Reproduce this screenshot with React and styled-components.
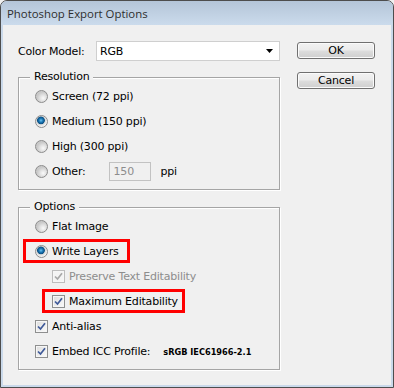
import React from "react";
import styled, { createGlobalStyle, css } from "styled-components";

const Global = createGlobalStyle`
  html, body { margin: 0; padding: 0; background: #f0f0f0; }
  body { font-family: "DejaVu Sans", "Liberation Sans", sans-serif; }
`;

const Window = styled.div`
  width: 394px;
  height: 388px;
  box-sizing: border-box;
  border: 1px solid #4d4d4d;
  border-radius: 7px 7px 0 0;
  background: #cad9ea;
  display: flex;
  flex-direction: column;
  overflow: hidden;
`;

const TitleBar = styled.div`
  height: 24px;
  flex: none;
  display: flex;
  align-items: center;
  padding-left: 6px;
  background: linear-gradient(#b4c5d8, #cbdbec);
  font-family: "Open Sans", "Liberation Sans", sans-serif;
  font-size: 11.4px;
  color: #2e2e2e;
`;

const Frame = styled.div`
  flex: 1;
  display: flex;
  padding: 0 2px 2px 2px;
`;

const Content = styled.div`
  flex: 1;
  display: flex;
  align-items: flex-start;
  background: #f0f0f0;
  padding: 16px 0 0 15px;
  font-size: 11px;
  letter-spacing: -0.2px;
  color: #000;
`;

const LeftCol = styled.div`
  width: 262px;
  display: flex;
  flex-direction: column;
`;

const RightCol = styled.div`
  margin-left: 17px;
  padding-top: 1px;
  display: flex;
  flex-direction: column;
  gap: 13px;
`;

const FieldRow = styled.div`
  display: flex;
  align-items: center;
  height: 20px;
`;

const FieldLabel = styled.span`
  width: 78px;
`;

const Select = styled.div`
  width: 184px;
  height: 20px;
  box-sizing: border-box;
  border: 1px solid #cfcfcf;
  background: #fff;
  display: flex;
  align-items: center;
  justify-content: space-between;
  padding: 0 6px 0 3px;
`;

const Button = styled.button`
  width: 78px;
  height: 17px;
  box-sizing: border-box;
  padding: 0;
  border: 1px solid #707070;
  border-radius: 3px;
  background: linear-gradient(#f2f2f2 0%, #ebebeb 48%, #dddddd 52%, #cfcfcf 100%);
  box-shadow: inset 0 0 0 1px #fbfbfb;
  font-family: "DejaVu Sans", sans-serif;
  font-size: 11px;
  letter-spacing: -0.2px;
  line-height: 14px;
  color: #000;
`;

const GroupBox = styled.div`
  position: relative;
  margin-top: ${(p) => p.$top}px;
  border: 1px solid #a5a5a5;
  box-shadow: inset 1px 1px 0 #fff, 1px 1px 0 #fff;
  padding: 6px 0 5px 16px;
  display: flex;
  flex-direction: column;
`;

const Legend = styled.span`
  position: absolute;
  top: -8px;
  left: 11px;
  padding: 0 4px;
  background: #f0f0f0;
  line-height: 14px;
`;

const Row = styled.div`
  height: 25px;
  display: flex;
  align-items: center;
  padding-left: ${(p) => (p.$indent ? 17 : 0)}px;
`;

const Item = styled.span`
  position: relative;
  display: inline-flex;
  align-items: center;
  gap: 4px;
  height: 14px;
  color: ${(p) => (p.$disabled ? "#8d8d8d" : "#000")};
  ${(p) =>
    p.$hl &&
    css`
      &::after {
        content: "";
        position: absolute;
        top: -6px;
        bottom: -4px;
        left: ${-p.$hl.l}px;
        right: ${-p.$hl.r}px;
        border: 3px solid #ff0000;
      }
    `}
`;

const RadioDot = styled.span`
  width: 13px;
  height: 13px;
  box-sizing: border-box;
  border-radius: 50%;
  border: 1px solid #8c8c8c;
  flex: none;
  background: ${(p) =>
    p.$on
      ? "radial-gradient(circle at 45% 40%, #6ac3f0 0, #1a76b4 2px, #0b4f82 3.5px, #d8d8d8 4.2px, #f2f2f2 6px)"
      : "radial-gradient(circle at 65% 65%, #fafafa 0, #e3e3e3 3px, #c9c9c9 6px)"};
`;

const Box = styled.span`
  width: 13px;
  height: 13px;
  box-sizing: border-box;
  flex: none;
  border: 1px solid ${(p) => (p.$disabled ? "#bdbdbd" : "#8e8f8f")};
  background: ${(p) =>
    p.$disabled ? "#f4f4f4" : "linear-gradient(135deg, #dcdcdc, #fbfbfb)"};
  box-shadow: inset 0 0 0 1px #f6f6f6;
  display: flex;
  align-items: center;
  justify-content: center;
`;

const SmallBold = styled.span`
  margin-left: 13px;
  font-size: 8.2px;
  font-weight: bold;
  letter-spacing: 0;
`;

const InputBox = styled.div`
  margin-left: 23px;
  width: 42px;
  height: 19px;
  box-sizing: border-box;
  border: 1px solid #c2c2c2;
  background: #f0f0f0;
  color: #8d8d8d;
  display: flex;
  align-items: center;
  padding-left: 4px;
`;

const Unit = styled.span`
  margin-left: 10px;
`;

const Check = ({ disabled }) => (
  <Box $disabled={disabled}>
    <svg width="9" height="9" viewBox="0 0 9 9">
      <path
        d="M1 4.5 L3.5 7 L8 1.2"
        fill="none"
        stroke={disabled ? "#a8a8a8" : "#3f5a99"}
        strokeWidth="1.7"
      />
    </svg>
  </Box>
);

const Arrow = () => (
  <svg width="7" height="4" viewBox="0 0 7 4">
    <path d="M0 0 H7 L3.5 4 Z" fill="#000" />
  </svg>
);

export default function App() {
  return (
    <>
      <Global />
      <Window>
        <TitleBar>Photoshop Export Options</TitleBar>
        <Frame>
          <Content>
            <LeftCol>
              <FieldRow>
                <FieldLabel>Color Model:</FieldLabel>
                <Select>
                  <span>RGB</span>
                  <Arrow />
                </Select>
              </FieldRow>

              <GroupBox $top={16}>
                <Legend>Resolution</Legend>
                <Row>
                  <Item><RadioDot />Screen (72 ppi)</Item>
                </Row>
                <Row>
                  <Item><RadioDot $on />Medium (150 ppi)</Item>
                </Row>
                <Row>
                  <Item><RadioDot />High (300 ppi)</Item>
                </Row>
                <Row>
                  <Item><RadioDot />Other:</Item>
                  <InputBox>150</InputBox>
                  <Unit>ppi</Unit>
                </Row>
              </GroupBox>

              <GroupBox $top={17}>
                <Legend>Options</Legend>
                <Row>
                  <Item><RadioDot />Flat Image</Item>
                </Row>
                <Row>
                  <Item $hl={{ l: 12, r: 11 }}><RadioDot $on />Write Layers</Item>
                </Row>
                <Row $indent>
                  <Item $disabled><Check disabled />Preserve Text Editability</Item>
                </Row>
                <Row $indent>
                  <Item $hl={{ l: 10, r: 7 }}><Check />Maximum Editability</Item>
                </Row>
                <Row>
                  <Item><Check />Anti-alias</Item>
                </Row>
                <Row>
                  <Item><Check />Embed ICC Profile:</Item>
                  <SmallBold>sRGB IEC61966-2.1</SmallBold>
                </Row>
              </GroupBox>
            </LeftCol>
            <RightCol>
              <Button>OK</Button>
              <Button>Cancel</Button>
            </RightCol>
          </Content>
        </Frame>
      </Window>
    </>
  );
}
